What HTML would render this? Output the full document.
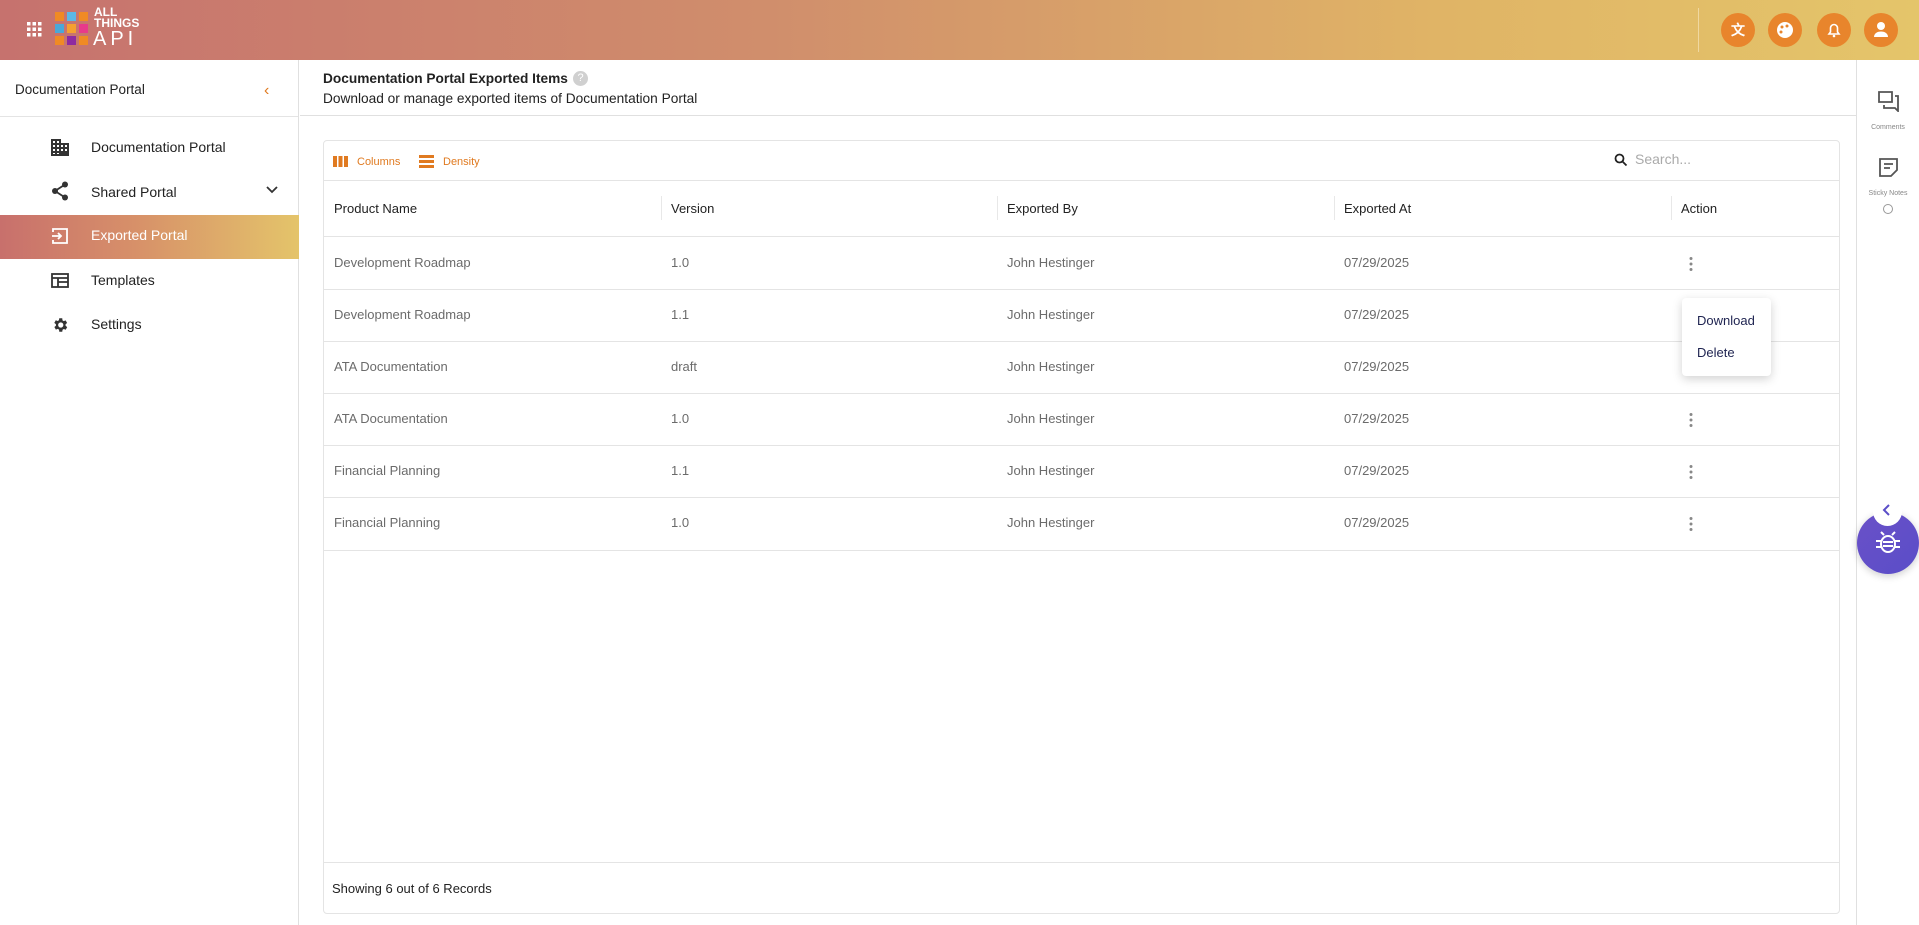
<!DOCTYPE html>
<html><head><meta charset="utf-8"><style>
*{box-sizing:border-box;margin:0;padding:0}
body{width:1919px;height:925px;overflow:hidden;font-family:"Liberation Sans",Arial,sans-serif;background:#fff;position:relative;color:#222}
.hdr{position:absolute;left:0;top:0;width:1919px;height:60px;background:linear-gradient(90deg,#c6726e 0%,#d08e6c 40%,#e0b466 75%,#e4c56a 100%)}
.abs{position:absolute}
.side{position:absolute;left:0;top:60px;width:299px;height:865px;border-right:1px solid #e0e0e0}
.nav{position:absolute;left:91px;font-size:14px;color:#222}
.ico{position:absolute;left:51px}
.th{position:absolute;top:201px;font-size:13px;color:#222}
.td{position:absolute;font-size:13px;color:#6b6b6b}
.row{position:absolute;left:324px;width:1515px;height:1px;background:#e4e4e4}
.sep{position:absolute;top:196px;width:1px;height:24px;background:#e8e8e8}
.hic{position:absolute;top:13px;width:34px;height:34px;border-radius:50%;background:#e8852c}
</style></head><body>
<div class="hdr">
  <svg class="abs" style="left:27px;top:22px" width="15" height="15" viewBox="0 0 15 15" fill="#fff"><rect x="0" y="0" width="3.5" height="3.5"/><rect x="5.5" y="0" width="3.5" height="3.5"/><rect x="11" y="0" width="3.5" height="3.5"/><rect x="0" y="5.5" width="3.5" height="3.5"/><rect x="5.5" y="5.5" width="3.5" height="3.5"/><rect x="11" y="5.5" width="3.5" height="3.5"/><rect x="0" y="11" width="3.5" height="3.5"/><rect x="5.5" y="11" width="3.5" height="3.5"/><rect x="11" y="11" width="3.5" height="3.5"/></svg>
  <svg class="abs" style="left:54px;top:10px" width="38" height="38" viewBox="0 0 38 38"><rect x="1" y="2" width="9" height="9" fill="#f08a24"/><rect x="13" y="2" width="9" height="9" fill="#5bb8e6"/><rect x="25" y="2" width="9" height="9" fill="#f08a24"/><rect x="1" y="14" width="9" height="9" fill="#4aa8d8"/><rect x="13" y="14" width="9" height="9" fill="#f5a030"/><rect x="25" y="14" width="9" height="9" fill="#e83a8a"/><rect x="1" y="26" width="9" height="9" fill="#f08a24"/><rect x="13" y="26" width="9" height="9" fill="#8e2aa0"/><rect x="25" y="26" width="9" height="9" fill="#f08a24"/></svg>
  <div class="abs" style="left:94px;top:7px;color:#fff;font-weight:bold;font-size:12px;line-height:11px">ALL<br>THINGS</div>
  <div class="abs" style="left:93px;top:29px;color:#fff;font-size:20px;letter-spacing:4px;line-height:20px">API</div>
  <div class="abs" style="left:1698px;top:8px;width:1px;height:44px;background:#f0d8a0"></div>
  <div class="hic" style="left:1721px"><div style="color:#fff;font-size:14px;text-align:center;line-height:34px;font-weight:bold">文</div></div>
  <div class="hic" style="left:1768px"><svg width="34" height="34" viewBox="0 0 34 34"><circle cx="17" cy="17" r="8" fill="#fff"/><circle cx="14" cy="14" r="1.5" fill="#e8852c"/><circle cx="19" cy="13" r="1.5" fill="#e8852c"/><circle cx="13" cy="19" r="1.5" fill="#e8852c"/></svg></div>
  <div class="hic" style="left:1817px"><svg width="34" height="34" viewBox="0 0 34 34"><path d="M12 21h10l-1.5-2v-4a3.5 3.5 0 0 0-7 0v4z" fill="none" stroke="#fff" stroke-width="1.6"/><circle cx="17" cy="23" r="1.3" fill="#fff"/></svg></div>
  <div class="hic" style="left:1864px"><svg width="34" height="34" viewBox="0 0 34 34"><circle cx="17" cy="13" r="4" fill="#fff"/><path d="M10 24c0-4 4-5.5 7-5.5s7 1.5 7 5.5z" fill="#fff"/></svg></div>
</div>

<div class="side">
  <div class="abs" style="left:15px;top:22px;font-size:13.5px">Documentation Portal</div>
  <div class="abs" style="left:264px;top:22px;color:#e07a20;font-size:16px">‹</div>
  <div class="abs" style="left:0;top:56px;width:298px;height:1px;background:#e4e4e4"></div>
</div>
<svg class="ico" style="top:139px" width="18" height="17" viewBox="0 0 18 17" fill="#333"><path d="M0 0h10v4h8v13H0zM2 2v2h2V2zm4 0v2h2V2zM2 6v2h2V6zm4 0v2h2V6zm4 0v2h2V6zm4 0v2h2V6zM2 10v2h2v-2zm4 0v2h2v-2zm4 0v2h2v-2zm4 0v2h2v-2zM2 14v1h2v-1zm4 0v1h2v-1z"/></svg>
<div class="nav" style="top:139px">Documentation Portal</div>
<svg class="ico" style="top:181px" width="18" height="20" viewBox="0 0 18 20"><circle cx="14" cy="3.5" r="3" fill="#333"/><circle cx="4" cy="10" r="3" fill="#333"/><circle cx="14" cy="16.5" r="3" fill="#333"/><path d="M14 3.5L4 10l10 6.5" stroke="#333" stroke-width="1.8" fill="none"/></svg>
<div class="nav" style="top:184px">Shared Portal</div>
<svg class="abs" style="left:266px;top:186px" width="12" height="8" viewBox="0 0 12 8"><path d="M1 1l5 5 5-5" stroke="#333" stroke-width="1.8" fill="none"/></svg>
<div class="abs" style="left:0;top:215px;width:299px;height:44px;background:linear-gradient(90deg,#c8706c 0%,#d79069 45%,#e4c46a 100%)"></div>
<svg class="ico" style="top:227px" width="18" height="18" viewBox="0 0 18 18" fill="none" stroke="#fff" stroke-width="1.8"><path d="M2 5V2h14v14H2v-3"/><path d="M1 9h9M7 6l3 3-3 3"/></svg>
<div class="nav" style="top:227px;color:#fff">Exported Portal</div>
<svg class="ico" style="top:273px" width="18" height="15" viewBox="0 0 18 15" fill="none" stroke="#333" stroke-width="1.8"><rect x="1" y="1" width="16" height="13"/><path d="M1 5h16M7 5v9M7 9h10"/></svg>
<div class="nav" style="top:272px">Templates</div>
<svg class="ico" style="top:316px" width="18" height="18" viewBox="0 0 24 24" fill="#333"><path d="M19.4 13a7.5 7.5 0 0 0 0-2l2.1-1.6-2-3.5-2.5 1a7 7 0 0 0-1.7-1L15 3h-4l-.4 2.7a7 7 0 0 0-1.7 1l-2.5-1-2 3.5L6.6 11a7.5 7.5 0 0 0 0 2l-2.1 1.6 2 3.5 2.5-1a7 7 0 0 0 1.7 1L11 21h4l.4-2.7a7 7 0 0 0 1.7-1l2.5 1 2-3.5zM13 15.5a3.5 3.5 0 1 1 0-7 3.5 3.5 0 0 1 0 7z"/></svg>
<div class="nav" style="top:316px">Settings</div>

<div class="abs" style="left:323px;top:71px;font-size:13.7px;font-weight:bold">Documentation Portal Exported Items</div>
<div class="abs" style="left:573px;top:71px;width:15px;height:15px;border-radius:50%;background:#d0d0d0;color:#fff;font-size:11px;text-align:center;line-height:15px">?</div>
<div class="abs" style="left:323px;top:91px;font-size:13.7px">Download or manage exported items of Documentation Portal</div>
<div class="abs" style="left:300px;top:115px;width:1556px;height:1px;background:#e0e0e0"></div>

<div class="abs" style="left:323px;top:140px;width:1517px;height:774px;border:1px solid #e4e4e4;border-radius:4px"></div>
<svg class="abs" style="left:333px;top:156px" width="15" height="11" viewBox="0 0 15 11" fill="#e07a20"><rect x="0" y="0" width="4" height="11"/><rect x="5.5" y="0" width="4" height="11"/><rect x="11" y="0" width="4" height="11"/></svg>
<div class="abs" style="left:357px;top:156px;font-size:11px;color:#e07a20">Columns</div>
<svg class="abs" style="left:419px;top:155px" width="15" height="13" viewBox="0 0 15 13" fill="#e07a20"><rect y="0" width="15" height="3"/><rect y="5" width="15" height="3"/><rect y="10" width="15" height="3"/></svg>
<div class="abs" style="left:443px;top:156px;font-size:11px;color:#e07a20">Density</div>
<svg class="abs" style="left:1614px;top:153px" width="14" height="14" viewBox="0 0 14 14" fill="none" stroke="#222" stroke-width="1.8"><circle cx="5.5" cy="5.5" r="4"/><path d="M8.5 8.5l4 4"/></svg>
<div class="abs" style="left:1635px;top:151px;font-size:14px;color:#aaa">Search...</div>
<div class="row" style="top:180px"></div>

<div class="th" style="left:334px">Product Name</div>
<div class="th" style="left:671px">Version</div>
<div class="th" style="left:1007px">Exported By</div>
<div class="th" style="left:1344px">Exported At</div>
<div class="th" style="left:1681px">Action</div>
<div class="sep" style="left:661px"></div><div class="sep" style="left:997px"></div><div class="sep" style="left:1334px"></div><div class="sep" style="left:1671px"></div>
<div class="row" style="top:236px"></div>

<div class="td" style="left:334px;top:255px">Development Roadmap</div><div class="td" style="left:671px;top:255px">1.0</div><div class="td" style="left:1007px;top:255px">John Hestinger</div><div class="td" style="left:1344px;top:255px">07/29/2025</div>
<div class="row" style="top:289px"></div>
<div class="td" style="left:334px;top:307px">Development Roadmap</div><div class="td" style="left:671px;top:307px">1.1</div><div class="td" style="left:1007px;top:307px">John Hestinger</div><div class="td" style="left:1344px;top:307px">07/29/2025</div>
<div class="row" style="top:341px"></div>
<div class="td" style="left:334px;top:359px">ATA Documentation</div><div class="td" style="left:671px;top:359px">draft</div><div class="td" style="left:1007px;top:359px">John Hestinger</div><div class="td" style="left:1344px;top:359px">07/29/2025</div>
<div class="row" style="top:393px"></div>
<div class="td" style="left:334px;top:411px">ATA Documentation</div><div class="td" style="left:671px;top:411px">1.0</div><div class="td" style="left:1007px;top:411px">John Hestinger</div><div class="td" style="left:1344px;top:411px">07/29/2025</div>
<div class="row" style="top:445px"></div>
<div class="td" style="left:334px;top:463px">Financial Planning</div><div class="td" style="left:671px;top:463px">1.1</div><div class="td" style="left:1007px;top:463px">John Hestinger</div><div class="td" style="left:1344px;top:463px">07/29/2025</div>
<div class="row" style="top:497px"></div>
<div class="td" style="left:334px;top:515px">Financial Planning</div><div class="td" style="left:671px;top:515px">1.0</div><div class="td" style="left:1007px;top:515px">John Hestinger</div><div class="td" style="left:1344px;top:515px">07/29/2025</div>
<div class="row" style="top:550px"></div>

<svg class="abs" style="left:1689px;top:256px" width="4" height="16" viewBox="0 0 4 16" fill="#888"><circle cx="2" cy="2.5" r="1.5"/><circle cx="2" cy="8" r="1.5"/><circle cx="2" cy="13.5" r="1.5"/></svg>
<svg class="abs" style="left:1689px;top:412px" width="4" height="16" viewBox="0 0 4 16" fill="#888"><circle cx="2" cy="2.5" r="1.5"/><circle cx="2" cy="8" r="1.5"/><circle cx="2" cy="13.5" r="1.5"/></svg>
<svg class="abs" style="left:1689px;top:464px" width="4" height="16" viewBox="0 0 4 16" fill="#888"><circle cx="2" cy="2.5" r="1.5"/><circle cx="2" cy="8" r="1.5"/><circle cx="2" cy="13.5" r="1.5"/></svg>
<svg class="abs" style="left:1689px;top:516px" width="4" height="16" viewBox="0 0 4 16" fill="#888"><circle cx="2" cy="2.5" r="1.5"/><circle cx="2" cy="8" r="1.5"/><circle cx="2" cy="13.5" r="1.5"/></svg>

<div class="abs" style="left:1682px;top:298px;width:89px;height:78px;background:#fff;border-radius:4px;box-shadow:0 3px 10px rgba(0,0,0,.18)"></div>
<div class="abs" style="left:1697px;top:313px;font-size:13px;color:#1e2350">Download</div>
<div class="abs" style="left:1697px;top:345px;font-size:13px;color:#1e2350">Delete</div>

<div class="row" style="top:862px"></div>
<div class="abs" style="left:332px;top:881px;font-size:13px">Showing 6 out of 6 Records</div>

<div class="abs" style="left:1856px;top:60px;width:1px;height:865px;background:#e0e0e0"></div>
<svg class="abs" style="left:1878px;top:91px" width="21" height="21" viewBox="0 0 21 21" fill="none" stroke="#555" stroke-width="1.8"><path d="M1 1h13v10H1z"/><path d="M17 5h3v15l-3-3H6v-3"/></svg>
<div class="abs" style="left:1863px;top:124px;width:50px;text-align:center;font-size:7px;color:#888">Comments</div>
<svg class="abs" style="left:1879px;top:158px" width="19" height="19" viewBox="0 0 19 19" fill="none" stroke="#555" stroke-width="1.8"><path d="M1 1h17v11l-6 6H1z"/><path d="M5 6h9M5 10h6"/></svg>
<div class="abs" style="left:1859px;top:190px;width:58px;text-align:center;font-size:7px;color:#888">Sticky Notes</div>
<div class="abs" style="left:1883px;top:204px;width:10px;height:10px;border:1px solid #999;border-radius:50%"></div>

<div class="abs" style="left:1857px;top:512px;width:62px;height:62px;border-radius:50%;background:linear-gradient(135deg,#6a50c8,#5a4ec8);box-shadow:0 2px 8px rgba(0,0,0,.2)"></div>
<div class="abs" style="left:1873px;top:497px;width:29px;height:29px;border-radius:50%;background:#fff"></div>
<svg class="abs" style="left:1882px;top:504px" width="10" height="12" viewBox="0 0 10 12"><path d="M7 1L2 6l5 5" stroke="#5a4ec8" stroke-width="2" fill="none"/></svg>
<svg class="abs" style="left:1874px;top:530px" width="28" height="26" viewBox="0 0 28 26" fill="none" stroke="#fff" stroke-width="2"><ellipse cx="14" cy="14" rx="7" ry="8"/><path d="M9 12h10M9 16h10M10 5l-3-3M18 5l3-3M7 11H2M7 17H2M21 11h5M21 17h5"/></svg>
</body></html>
